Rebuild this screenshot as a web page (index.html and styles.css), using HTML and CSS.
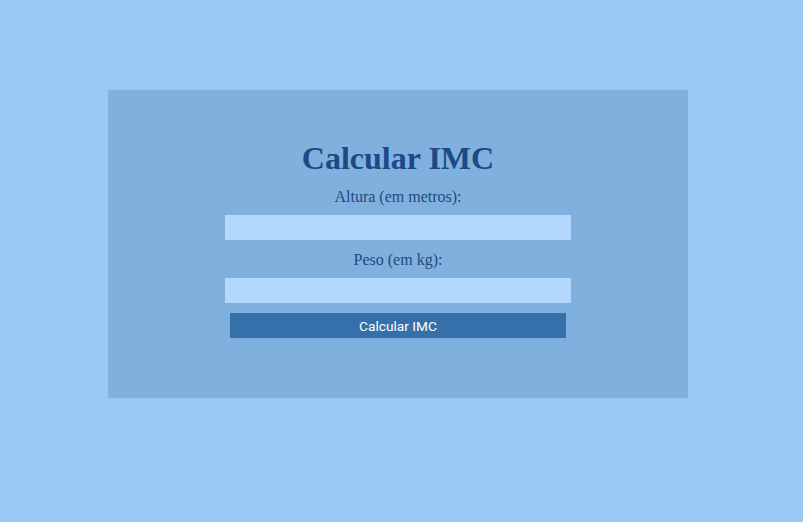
FILE: index.html
```html
<!DOCTYPE html>
<html lang="pt">
<head>
<meta charset="utf-8">
<title>Calcular IMC</title>
<link rel="stylesheet" href="styles.css">
</head>
<body>
<div class="page">
  <form class="card">
    <h1 class="title">Calcular IMC</h1>
    <label class="label label-first" for="altura">Altura (em metros):</label>
    <input class="field" id="altura" type="text">
    <label class="label label-second" for="peso">Peso (em kg):</label>
    <input class="field" id="peso" type="text">
    <button class="btn" type="button">Calcular IMC</button>
  </form>
</div>
</body>
</html>
```
FILE: styles.css
```css
html, body {
  margin: 0;
  padding: 0;
  background: #99c8f5;
  height: 100%;
}
.page {
  display: flex;
  padding: 90px 0 0 108px;
}
.card {
  width: 580px;
  box-sizing: border-box;
  background: #80b0dd;
  padding: 50px 0 60px;
  display: flex;
  flex-direction: column;
  align-items: center;
  font-family: "Liberation Serif", "Times New Roman", serif;
  color: #1e4a80;
}
.title {
  margin: 0 0 10px;
  font-size: 32px;
  line-height: 36px;
  font-weight: bold;
  color: #1b4a84;
}
.label {
  font-size: 16px;
  line-height: 18px;
  padding-top: 2px;
  margin-bottom: 8px;
}
.label-first {
  margin-bottom: 9px;
}
.label-second {
  padding-top: 1px;
  margin-bottom: 9px;
}
.field {
  width: 346px;
  height: 25px;
  box-sizing: border-box;
  border: none;
  background: #b3d8fd;
  margin: 0 0 10px;
  padding: 0;
  outline: none;
}
.btn {
  width: 336px;
  height: 25px;
  border: none;
  background: #3670ab;
  color: #ffffff;
  font-family: Roboto, "Liberation Sans", Arial, sans-serif;
  font-size: 13.7px;
  padding: 0;
  margin: 0;
}
```
